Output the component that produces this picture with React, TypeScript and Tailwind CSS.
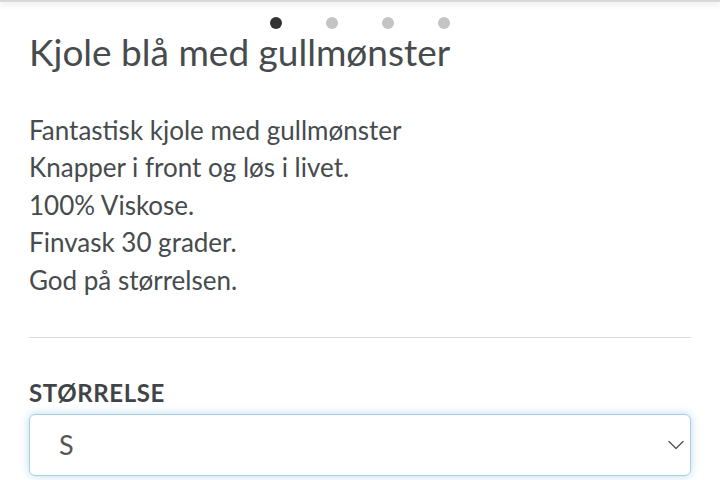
import { ChevronDown } from "lucide-react";

const lines = [
  "Fantastisk kjole med gullmønster",
  "Knapper i front og løs i livet.",
  "100% Viskose.",
  "Finvask 30 grader.",
  "God på størrelsen.",
];

export default function App() {
  return (
    <div className="relative h-[480px] w-[720px] overflow-hidden bg-white font-['Lato',sans-serif] text-[#464b4e]">
      {/* shadow from the image slider above */}
      <div className="h-[2px] w-full bg-[#d8d8d8] shadow-[0_2px_6px_rgba(0,0,0,0.18)]" />

      <div className="flex justify-center gap-[44px] pt-[15px]">
        <span className="h-[12px] w-[12px] rounded-full bg-[#333]" />
        <span className="h-[12px] w-[12px] rounded-full bg-[#c4c4c4]" />
        <span className="h-[12px] w-[12px] rounded-full bg-[#c4c4c4]" />
        <span className="h-[12px] w-[12px] rounded-full bg-[#c4c4c4]" />
      </div>

      <div className="px-[29px]">
        <h1 className="mt-[1px] text-[37px] leading-[44px] font-normal">Kjole blå med gullmønster</h1>

        <div className="mt-[38px] text-[26px] leading-[37.4px]">
          {lines.map((l) => (
            <p key={l}>{l}</p>
          ))}
        </div>

        <div className="mt-[38px] h-px bg-[#dcdcdc]" />

        <div className="mt-[40px] text-[24px] leading-[30px] font-bold tracking-[0.6px] text-[#3f4447]">STØRRELSE</div>

        <div className="mt-[6px] flex h-[62px] items-center justify-between rounded-[6px] border border-[#a8cde6] pl-[29px] pr-0 shadow-[0_0_8px_rgba(102,175,233,0.45)]">
          <span className="text-[27px] text-[#555]">S</span>
          <ChevronDown className="h-[28px] w-[28px] text-[#555]" strokeWidth={1.2} />
        </div>
      </div>
    </div>
  );
}
